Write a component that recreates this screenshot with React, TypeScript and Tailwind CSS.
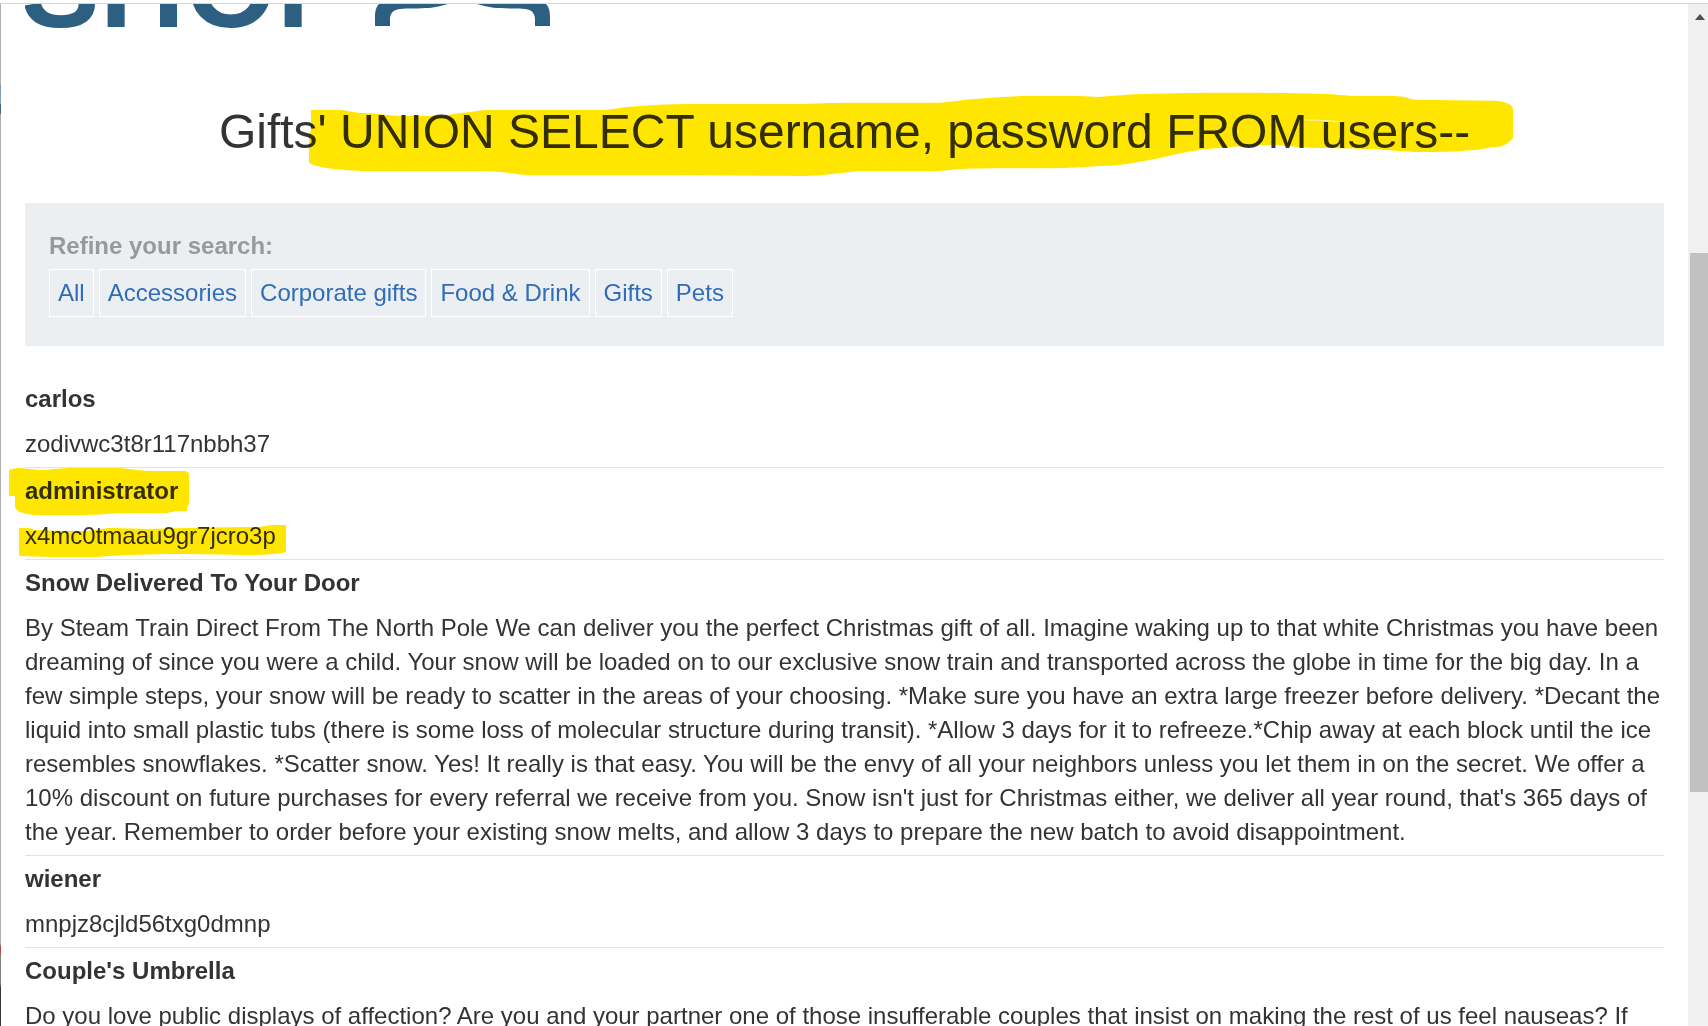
const categories = ["All", "Accessories", "Corporate gifts", "Food & Drink", "Gifts", "Pets"];

type Item = { title: string; body: string; titleMark?: boolean; bodyMark?: boolean };

const items: Item[] = [
  { title: "carlos", body: "zodivwc3t8r117nbbh37" },
  { title: "administrator", body: "x4mc0tmaau9gr7jcro3p", titleMark: true, bodyMark: true },
  {
    title: "Snow Delivered To Your Door",
    body: "By Steam Train Direct From The North Pole We can deliver you the perfect Christmas gift of all. Imagine waking up to that white Christmas you have been dreaming of since you were a child. Your snow will be loaded on to our exclusive snow train and transported across the globe in time for the big day. In a few simple steps, your snow will be ready to scatter in the areas of your choosing. *Make sure you have an extra large freezer before delivery. *Decant the liquid into small plastic tubs (there is some loss of molecular structure during transit). *Allow 3 days for it to refreeze.*Chip away at each block until the ice resembles snowflakes. *Scatter snow. Yes! It really is that easy. You will be the envy of all your neighbors unless you let them in on the secret. We offer a 10% discount on future purchases for every referral we receive from you. Snow isn't just for Christmas either, we deliver all year round, that's 365 days of the year. Remember to order before your existing snow melts, and allow 3 days to prepare the new batch to avoid disappointment.",
  },
  { title: "wiener", body: "mnpjz8cjld56txg0dmnp" },
  {
    title: "Couple's Umbrella",
    body: "Do you love public displays of affection? Are you and your partner one of those insufferable couples that insist on making the rest of us feel nauseas? If",
  },
];

function HeadingMark() {
  return (
    <svg
      aria-hidden="true"
      className="pointer-events-none absolute -top-4 left-20 h-[95px] w-[1220px] max-w-none mix-blend-multiply"
      viewBox="300 85 1220 95"
    >
      <path
        fill="#ffe600"
        d="M312 109H343C352 110 356 112 365 112C380 112 388 115 405 115H441C452 114 458 112 468 111.500C478 110 482 109 490 109H606C614 108 620 107 628 106C650 104 670 103 691 103H803C825 102 840 101.700 861 101.700H939C952 101 962 99 975 98C993 97 1010 95 1029 95H1080L1100 96C1115 95 1130 93 1145 93C1175 92 1204 91.700 1234 91.700C1266 91.700 1295 92 1323 93C1337 93 1347 95 1359 95H1395C1407 95 1409 98 1417 99C1442 99 1468 99.700 1493 99.700C1507 100 1514 104 1514 108V137C1511 141 1505 146 1497 146C1489 146 1483 149 1475 149C1461 150 1449 151 1435 151C1423 151 1411 151 1399 150C1388 149 1378 148 1368 148C1349 147 1330 147 1310 146.700C1296 146 1284 144 1270 144C1258 144 1246 145 1234 145.700C1219 147 1204 148 1189 150.700C1174 153 1160 158 1145 160C1130 163 1115 165 1100 165C1076 167 1053 167.300 1029 167.300C1006 167.300 984 167 962 168C950 169 941 170.300 930 170.300H859C838 172 824 175 803 175C750 175 700 174 646 174H530C520 174 514 172 504 171.300C492 170 480 170 468 170H370C354 170 342 169 329 167.300C320 166 314 164 310 162V133L312 130Z"
      />
      <path stroke="#fff7b0" fill="none" d="M1306 119C1320 119 1332 120 1344 121" />
    </svg>
  );
}

function TitleMark() {
  return (
    <svg
      aria-hidden="true"
      className="pointer-events-none absolute -left-5 top-0 h-[50px] w-[190px] max-w-none mix-blend-multiply"
      viewBox="5 468 190 50"
    >
      <path
        fill="#ffe600"
        d="M9 470L17 468C26 468 34 470 43 470C55 469 63 468 73 468H120C132 469 142 471 153 471H183C187 471 189 472 189 475V503C189 506 187 507 187 508V511H177L167 513H117C105 514 94 515 83 515H37C30 515 24 513 20 512C16 510 15 508 15 507V496H9Z"
      />
    </svg>
  );
}

function BodyMark() {
  return (
    <svg
      aria-hidden="true"
      className="pointer-events-none absolute -left-5 top-2 h-[40px] w-[290px] max-w-none mix-blend-multiply"
      viewBox="5 522 290 40"
    >
      <path
        fill="#ffe600"
        d="M19 528H27C31 528 33 530 37 530C54 531 70 531 87 531C97 530 103 528 113 528L147 529C185 528 222 527 260 527C265 526 269 525 273 525H286V552C282 553 277 554 273 554C263 555 253 555 243 555C217 554 193 554 167 554C153 554 140 555 127 555C121 555 115 556 110 556C100 557 90 557 80 557C60 557 40 557 20 556L19 554Z"
      />
    </svg>
  );
}

export default function App() {
  return (
    <div className="flex h-screen flex-col overflow-hidden bg-white pt-[3px] font-['Liberation_Sans',Arial,sans-serif] text-2xl text-[#333332]">
      <div className="flex min-h-0 flex-1 border-t border-[#d6d6d6]">
        <div className="w-px shrink-0 bg-[linear-gradient(#b0b0b0_80px,#7594b0_82px,#8fa9c0_99px,#3f5c80_101px,#4a6485_109px,#b0b0b0_111px,#b0b0b0_940px,#c04040_943px,#c04040_948px,#808080_951px,#808080_980px,#333333_984px)]" />
        <main className="min-w-0 flex-1 overflow-hidden px-6">
          <header className="flex h-[25px] items-end gap-5">
            <div className="flex h-[25px] items-end overflow-hidden">
              <span className="-mb-[21px] -ml-1 block text-[118px] leading-[128px] font-bold text-[#2c5f80]">SHOP</span>
            </div>
            <svg aria-hidden="true" className="h-[25px] w-[175px] shrink-0" viewBox="375 4 175 25">
              <g fill="#2c5f80">
                <path d="M375 26V18C375 11 376 7 379 4H448C440 6 434 8 425 8C415 9 408 8 400 9C392 10 390 14 390 20V26Z" />
                <path d="M550 26V18C550 11 549 7 546 4H477C485 6 491 8 500 8C510 9 517 8 525 9C533 10 535 14 535 20V26Z" />
              </g>
            </svg>
          </header>

          <section className="pt-[73px] pb-[41px] text-center">
            <h1 className="relative inline-block text-5xl leading-[60px] whitespace-nowrap">
              Gifts' UNION SELECT username, password FROM users--
              <HeadingMark />
            </h1>
          </section>

          <nav className="bg-[#ebeff2] px-6 pt-[26px] pb-[29px]" aria-label="Refine your search">
            <p className="pb-1.5 leading-[34px] font-bold text-[#999999]">Refine your search:</p>
            <div className="flex flex-wrap gap-[5px]">
              {categories.map((c) => (
                <a key={c} href="#" className="border border-white px-2 py-1.5 leading-[34px] text-[#2f6cb9]">
                  {c}
                </a>
              ))}
            </div>
          </nav>

          <table className="mt-[30px] w-full text-left">
            <tbody>
              {items.map((it) => (
                <tr key={it.title} className="flex flex-col border-b border-[#e3e3e3]">
                  <th scope="row" className="relative px-0 py-1.5 leading-[34px] font-bold">
                    {it.title}
                    {it.titleMark && <TitleMark />}
                  </th>
                  <td className="relative px-0 pt-[5px] pb-1.5 leading-[34px]">
                    {it.body}
                    {it.bodyMark && <BodyMark />}
                  </td>
                </tr>
              ))}
            </tbody>
          </table>
        </main>
        <aside className="flex w-5 shrink-0 flex-col items-end bg-[#f0f0f0]" aria-hidden="true">
          <svg className="mt-2.5 mr-[3px] h-1.5 w-2.5 shrink-0" viewBox="0 0 10 6">
            <path d="M0 6L5 0L10 6Z" fill="#505050" />
          </svg>
          <div className="grow-[233]" />
          <div className="w-[18px] grow-[539] bg-[#c1c1c1]" />
          <div className="grow-[234]" />
        </aside>
      </div>
    </div>
  );
}
